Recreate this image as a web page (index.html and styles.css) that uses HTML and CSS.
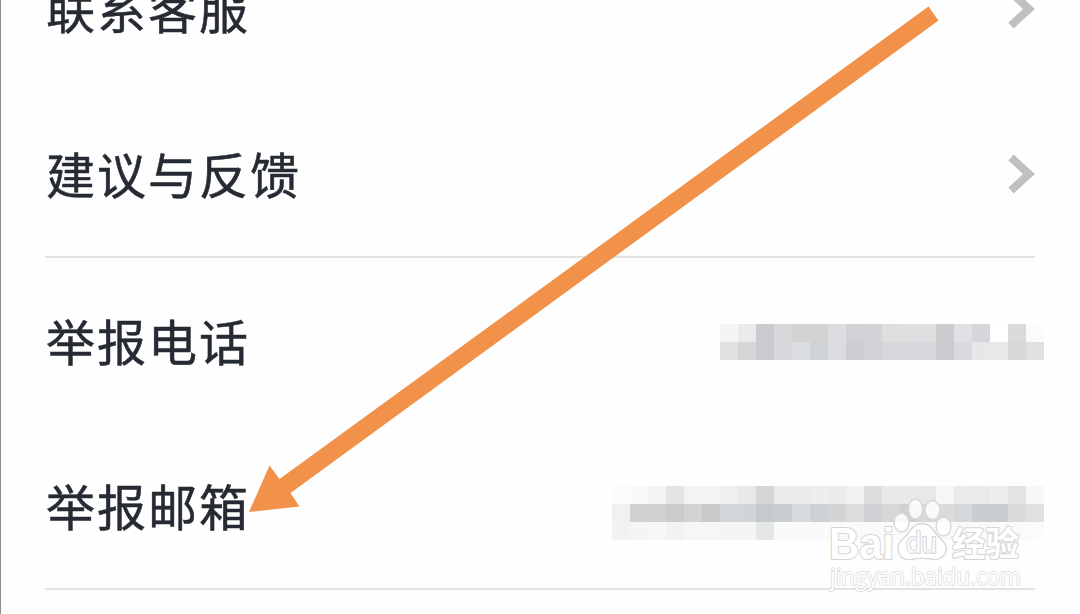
FILE: index.html
```html
<!DOCTYPE html>
<html lang="zh-CN">
<head>
<meta charset="UTF-8">
<meta name="viewport" content="width=device-width, initial-scale=1.0">
<title>联系客服</title>
<link rel="stylesheet" href="styles.css">
</head>

<body>

<div class="list">
  <div class="row">
    <span class="label">联系客服</span>
    <svg class="chevron" width="28" height="40" viewBox="0 0 28 40"><path d="M4 3.5 L22 20 L4 36.5"/></svg>
  </div>
  <div class="row line">
    <span class="label">建议与反馈</span>
    <svg class="chevron" width="28" height="40" viewBox="0 0 28 40"><path d="M4 3.5 L22 20 L4 36.5"/></svg>
  </div>
  <div class="row">
    <span class="label">举报电话</span>
    <div class="mosaic phone" id="phone"></div>
  </div>
  <div class="row line">
    <span class="label">举报邮箱</span>
    <div class="mosaic mail" id="mail"></div>
  </div>
</div>

<!-- arrow -->
<svg class="arrow" width="1080" height="614" viewBox="0 0 1080 614">
  <path d="M249 512 L269.500 465.500 L279.500 479 L928.500 6.500 L938.500 20.500 L290.500 493 L299.500 506.500 Z"/>
</svg>

<!-- watermark -->
<svg class="mark" width="210" height="100" viewBox="0 0 210 100">
  <text class="brand" x="6" y="65" textLength="65" lengthAdjust="spacingAndGlyphs">Bai</text>
  <ellipse cx="78.500" cy="28.500" rx="7.500" ry="9.500"/>
  <ellipse cx="92.500" cy="15" rx="7" ry="10"/>
  <ellipse cx="109.500" cy="16" rx="7.500" ry="9.500"/>
  <ellipse cx="120.500" cy="32.500" rx="7.500" ry="9.500"/>
  <path d="M99 29.500 C91 29.500 88 36 84 41 C79 46 74 49 75 56 C76 64 82 66 88 65.500 C96 64 103 64 110 65.500 C117 66 122 62 123.500 56 C124 49 118 46 114 41 C110 36 107 29.500 99 29.500 Z"/>
  <text class="du" x="83" y="59" textLength="31" lengthAdjust="spacingAndGlyphs">du</text>
  <text class="cn" x="129" y="62" textLength="67" lengthAdjust="spacingAndGlyphs">经验</text>
  <text class="url" x="7" y="91" textLength="191" lengthAdjust="spacingAndGlyphs">jingyan.baidu.com</text>
</svg>

<script>
const phone = [
  "f5f5f5 ebebea cbcacf d8d8da d2d3d3 d2d3d3 dcdde0 d1d1d6 d4d4d8 dededf dedfe0 dedfe0 cccdcf e0e1e4 d5d6d9 ffffff d9dadb fbfbfb",
  "e0e1e1 d5d6d5 cbcacf d8d8dc dcdde0 d0d4d7 dadce0 cdcdd3 d2d2d8 d6d7db d6d7db d7d8dc cacbcd d9dadd e6e7e9 e8e8ea d6d7d8 e0e0e1"
];

const mail = [
  "fbfbfb f9f9f9 f4f4f4 e3e4e4 f3f3f4 f4f4f5 efefef e8e9ea d5d6d7 ebebec ebebec eeeeef ebebec f2f2f2 dcdddf e9e9ea e9e9eb e8e8e9 f7f7f7 ebebec eaeaeb eeeeef e2e3e4 f7f7f7",
  "f1f1f1 d0d2d1 d0d2d1 cacccb d2d3d2 c8caca d3d7d9 d1d5d8 c7cacd c9cdd0 d9dbde cfd2d5 d2d4d6 dcdddf cfd1d4 d5d7d9 cfd1d3 d5d7d9 d9dbdd d6d7d9 cbced1 cbced1 d9dadc e0e1e2",
  "f2f2f2 f5f5f5 f7f7f7 f1f2f2 f6f6f6 f6f6f6 f5f5f6 f4f5f5 e6e7e9 f9fafa fafafa fafafa fafafa fafafa fafafa fafafa fafafa fafafa fafafa fafafa fafafa fafafa fafafa fbfbfb"
];

function fill(id, rows) {
  document.getElementById(id).innerHTML = rows.join(" ").split(" ")
    .map(c => `<i style="background:#${c}"></i>`).join("");
}

fill("phone", phone);
fill("mail", mail);
</script>

</body>
</html>
```

FILE: styles.css
```css
* {
  box-sizing: border-box;
}

body {
  margin: 0;
  height: 614px;
  overflow: hidden;
  position: relative;
  background: #fefefe;
  border-left: 1px solid #8e8e8e;
  font-family: "Noto Sans CJK SC", sans-serif;
}

.list {
  margin: -74px 45px 0 44px;
}

.row {
  height: 165px;
  display: flex;
  align-items: center;
  justify-content: space-between;
}

.row.line {
  height: 167px;
  border-bottom: 2px solid #e2e2e2;
}

.label {
  font-size: 49px;
  line-height: 72px;
  letter-spacing: 2px;
  color: #262b33;
  -webkit-text-stroke: 0.5px #262b33;
  margin: -1px 0 0 1px;
}

.chevron {
  fill: none;
  stroke: #bfc1c1;
  stroke-width: 8;
}

.mosaic {
  display: grid;
  grid-auto-rows: 18px;
  margin-right: -9px;
}

.phone {
  grid-template-columns: repeat(18, 18px);
  margin-top: 2px;
}

.mail {
  grid-template-columns: repeat(24, 18px);
  margin-top: 14px;
}

.arrow {
  position: absolute;
  top: 0;
  left: -1px;
  fill: #f2924a;
}

.mark {
  position: absolute;
  left: 822px;
  top: 494px;
  fill: #fff;
  fill-opacity: 0.85;
  stroke: #d6d6d6;
  stroke-width: 1.3;
}

.mark text {
  paint-order: stroke;
  stroke-linejoin: round;
}

.mark .brand {
  font: bold 44px "Liberation Sans", sans-serif;
  fill-opacity: 1;
  stroke-width: 2.2;
}

.mark .du {
  font: 29px "Liberation Sans", sans-serif;
  stroke-width: 2;
}

.mark .cn {
  font: bold 34px "Noto Sans CJK SC", sans-serif;
  fill-opacity: 1;
  stroke-width: 2.2;
}

.mark .url {
  font: 23px "Open Sans", sans-serif;
  fill-opacity: 1;
  stroke: #dcdcdc;
  stroke-width: 1.6;
}
```
